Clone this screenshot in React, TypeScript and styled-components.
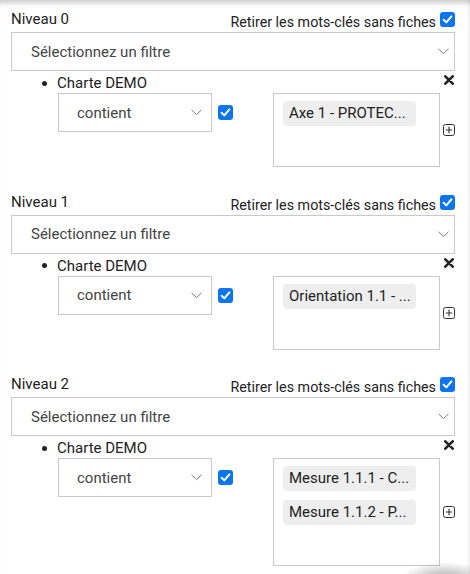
import React from "react";
import styled, { createGlobalStyle } from "styled-components";

const Global = createGlobalStyle`
  html, body { margin: 0; padding: 0; background: #fff; }
  body { font-family: Roboto, "Noto Sans", Arial, sans-serif; color: #222; }
  * { box-sizing: border-box; }
`;

const Page = styled.div`
  position: relative;
  width: 470px;
  height: 574px;
  overflow: hidden;
  padding: 10px 15px 0 11px;
  background: #fff;
  box-shadow: inset 0 7px 6px -5px rgba(0, 0, 0, 0.28), inset -5px 0 5px -5px rgba(0, 0, 0, 0.12);
`;

const Section = styled.section`
  display: flex;
  flex-direction: column;
  margin-bottom: 25.5px;
`;

const Header = styled.div`
  display: flex;
  justify-content: space-between;
  align-items: flex-start;
  height: 22px;
`;

const Title = styled.div`
  font-size: 15px;
  line-height: 18px;
  color: #222;
`;

const RemoveGroup = styled.label`
  display: flex;
  align-items: flex-start;
  gap: 4px;
  padding-top: 2px;
`;

const RemoveText = styled.span`
  font-size: 14.3px;
  line-height: 16px;
  margin-top: 2px;
  color: #222;
`;

const Box = styled.span`
  width: 15px;
  height: 15px;
  border-radius: 3px;
  background: #0b75f0;
  display: inline-flex;
  align-items: center;
  justify-content: center;
  flex: none;
`;

const Select = styled.div<{ $w?: number; $pl: number; $pr: number }>`
  display: flex;
  align-items: center;
  justify-content: space-between;
  height: 39px;
  width: ${(p) => (p.$w ? `${p.$w}px` : "100%")};
  border: 1px solid #c9c9c9;
  background: #fff;
  padding: 0 ${(p) => p.$pr}px 0 ${(p) => p.$pl}px;
  font-size: 15px;
  color: #444;
  flex: none;
`;

const CriterionHead = styled.div`
  display: flex;
  align-items: flex-start;
  justify-content: space-between;
  height: 22px;
  padding-top: 3px;
  padding-left: 31px;
`;

const Bullet = styled.span`
  display: flex;
  align-items: center;
  gap: 10px;
  font-size: 15px;
  line-height: 18px;
  color: #222;
  &::before {
    content: "";
    width: 5px;
    height: 5px;
    border-radius: 50%;
    background: #222;
  }
`;

const CloseBtn = styled.span`
  display: flex;
  margin-top: 1px;
  margin-right: 1px;
`;

const CriterionBody = styled.div`
  display: flex;
  align-items: center;
  padding-left: 47px;
`;

const OpWrap = styled.div`
  display: flex;
  align-items: center;
  align-self: flex-start;
  gap: 6px;
`;

const MultiBox = styled.div`
  width: 167px;
  margin-left: 40px;
  border: 1px solid #c9c9c9;
  padding: 7px 9px 40px;
  display: flex;
  flex-direction: column;
  gap: 9px;
  background: #fff;
`;

const Chip = styled.div`
  width: 133px;
  height: 25px;
  border-radius: 4px;
  background: #eeeeee;
  padding-left: 6px;
  font-size: 15px;
  line-height: 25px;
  color: #222;
  white-space: nowrap;
  overflow: hidden;
`;

const Plus = styled.span`
  display: flex;
  margin-left: 3px;
`;

const BottomShade = styled.div`
  position: absolute;
  right: -20px;
  bottom: -22px;
  width: 90px;
  height: 34px;
  border-radius: 50%;
  background: radial-gradient(ellipse at center, rgba(0, 0, 0, 0.35) 0%, rgba(0, 0, 0, 0.12) 45%, rgba(0, 0, 0, 0) 70%);
`;

const Check = () => (
  <Box>
    <svg width="11" height="11" viewBox="0 0 11 11">
      <path d="M1.6 5.8 L4.3 8.4 L9.4 2.4" fill="none" stroke="#fff" strokeWidth="2" strokeLinecap="round" strokeLinejoin="round" />
    </svg>
  </Box>
);

const Chevron = () => (
  <svg width="11" height="7" viewBox="0 0 11 7">
    <path d="M0.5 0.8 L5.5 5.6 L10.5 0.8" fill="none" stroke="#666" strokeWidth="0.9" />
  </svg>
);

const Times = () => (
  <svg width="10" height="10" viewBox="0 0 10 10">
    <path d="M1.3 1.3 L8.7 8.7 M8.7 1.3 L1.3 8.7" stroke="#222" strokeWidth="2.6" strokeLinecap="round" />
  </svg>
);

const PlusSquare = () => (
  <svg width="12" height="12" viewBox="0 0 12 12">
    <rect x="0.5" y="0.5" width="11" height="11" rx="2" fill="none" stroke="#333" strokeWidth="1" />
    <path d="M6 2.8 V9.2 M2.8 6 H9.2" stroke="#333" strokeWidth="1.1" />
  </svg>
);

const levels = [
  { name: "Niveau 0", chips: ["Axe 1 - PROTEC..."] },
  { name: "Niveau 1", chips: ["Orientation 1.1 - ..."] },
  { name: "Niveau 2", chips: ["Mesure 1.1.1 - C...", "Mesure 1.1.2 - P..."] },
];

export default function App() {
  return (
    <>
      <Global />
      <Page>
        {levels.map((l) => (
          <Section key={l.name}>
            <Header>
              <Title>{l.name}</Title>
              <RemoveGroup>
                <RemoveText>Retirer les mots-clés sans fiches</RemoveText>
                <Check />
              </RemoveGroup>
            </Header>
            <Select $pl={19} $pr={5}>
              <span>Sélectionnez un filtre</span>
              <Chevron />
            </Select>
            <CriterionHead>
              <Bullet>Charte DEMO</Bullet>
              <CloseBtn>
                <Times />
              </CloseBtn>
            </CriterionHead>
            <CriterionBody>
              <OpWrap>
                <Select $w={154} $pl={18} $pr={9}>
                  <span>contient</span>
                  <Chevron />
                </Select>
                <Check />
              </OpWrap>
              <MultiBox>
                {l.chips.map((c) => (
                  <Chip key={c}>{c}</Chip>
                ))}
              </MultiBox>
              <Plus>
                <PlusSquare />
              </Plus>
            </CriterionBody>
          </Section>
        ))}
        <BottomShade />
      </Page>
    </>
  );
}
